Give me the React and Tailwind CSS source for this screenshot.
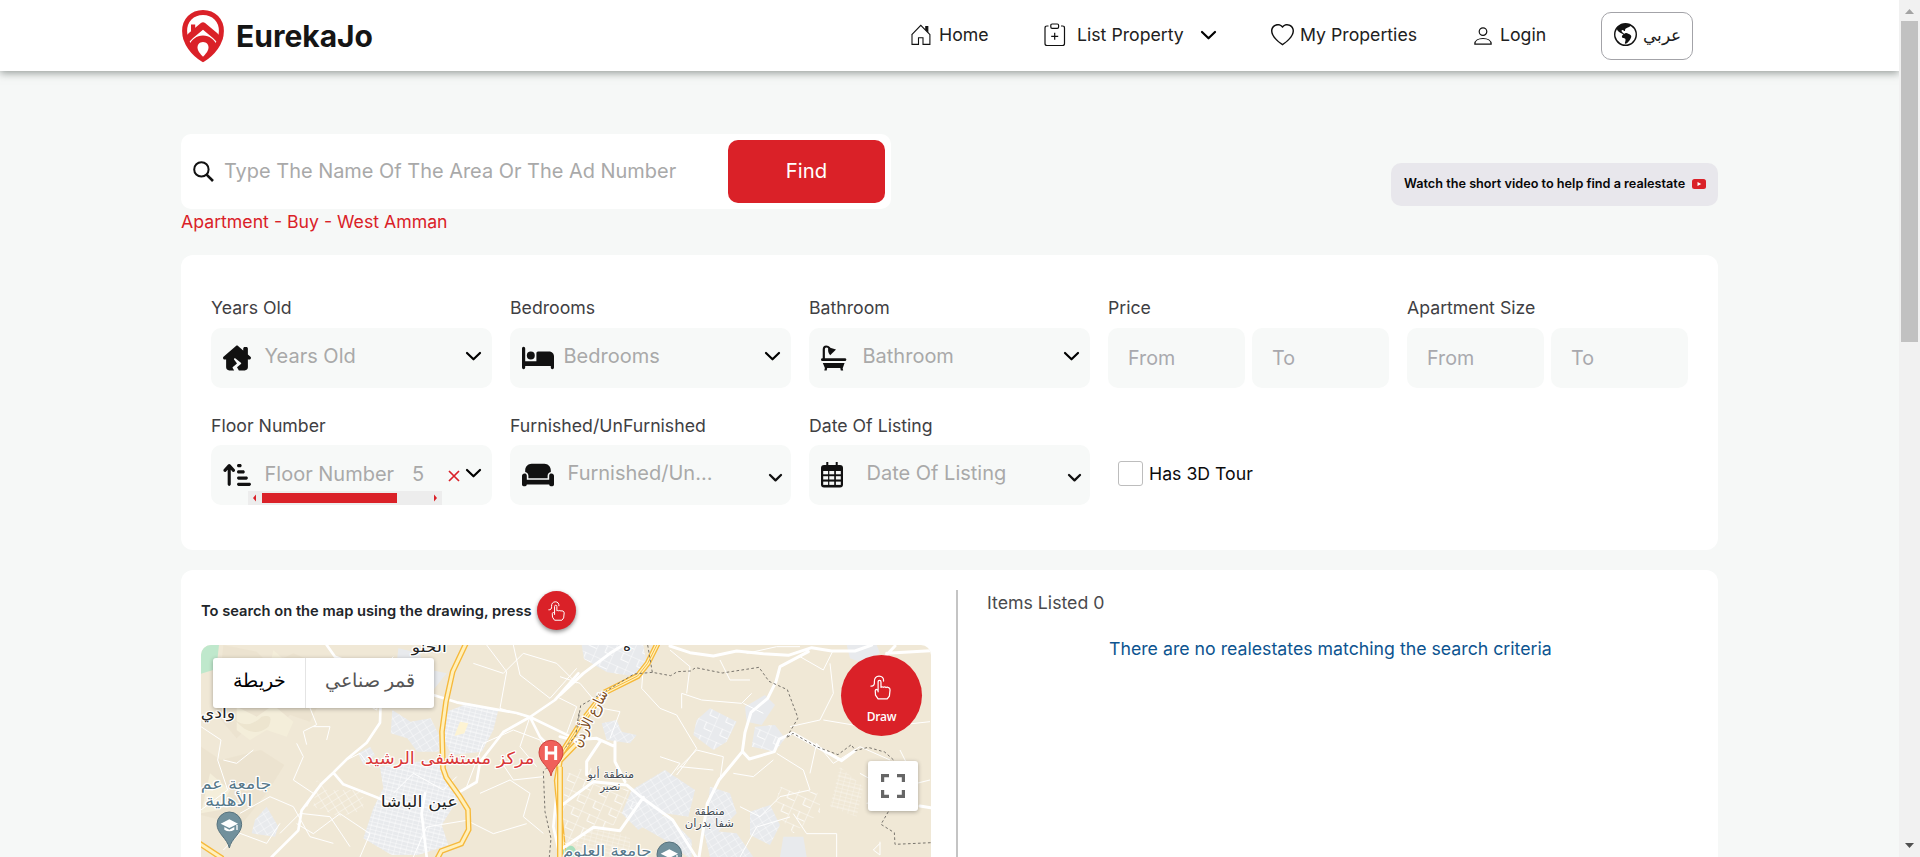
import React from "react";
import { FaBed, FaHouseChimneyCrack, FaArrowUpShortWide, FaCouch } from "react-icons/fa6";
import { BsGlobeAmericas, BsHeart } from "react-icons/bs";

function Logo() {
  return (
    <svg width="44" height="54" viewBox="0 0 44 54" fill="none" stroke="#da2128">
      <path d="M22 3.5C11 3.5 3.6 11.5 3.6 22c0 12 9 22.600 18.400 28.300C31.400 44.600 40.400 34 40.400 22 40.400 11.500 33 3.500 22 3.500Z" strokeWidth="5" />
      <path d="M4.500 32 10 26.500 22 16.500 34 26.500 39.500 32" strokeWidth="6.500" strokeLinejoin="round" />
      <path d="M10 15.500h4.200v5.200L10 24.500Z" fill="#da2128" stroke="none" />
      <path d="M22 26.500c-6.500 0-11.200 4-13.600 9C11.500 43 17 48.500 22 52c5-3.500 10.500-9 13.600-16.500-2.400-5-7.100-9-13.600-9Z" fill="#da2128" stroke="none" />
      <path d="M22 33c-3.800 0-5.500 2.800-5.500 5.600 0 3.400 3 6.600 5.500 9.200 2.500-2.600 5.500-5.800 5.500-9.200C27.500 35.800 25.800 33 22 33Z" fill="#fff" stroke="none" />
    </svg>
  );
}

function Chevron({ size = "lg" }) {
  return size === "lg" ? (
    <svg width="17" height="11" viewBox="0 0 17 11" fill="none" stroke="#000" strokeWidth="2.200" strokeLinecap="round" strokeLinejoin="round">
      <path d="M2 2l6.500 6.300L15 2" />
    </svg>
  ) : (
    <svg width="15" height="10" viewBox="0 0 15 10" fill="none" stroke="#111" strokeWidth="2.300" strokeLinecap="round" strokeLinejoin="round">
      <path d="M2 2l5.500 5.400L13 2" />
    </svg>
  );
}

function HomeIcon() {
  return (
    <svg width="20" height="22" viewBox="0 0 20 22" fill="none" stroke="#111" strokeWidth="1.100">
      <path d="M1 10.500V20.400h6.500v-6.700h4.500v6.700h6.900V10.500M.600 10.800 9.800 1.400 19.200 10.800" />
      <path d="M14.800 2.500h2v5l-2-2Z" fill="#111" />
    </svg>
  );
}

function ClipboardIcon() {
  return (
    <svg width="22" height="24" viewBox="0 0 22 24" fill="none" stroke="#111" strokeWidth="1.200">
      <path d="M4.500 3H3Q1 3 1 5v15.500q0 2 2 2h15.500q2 0 2-2V5q0-2-2-2H17" />
      <rect x="6.800" y="1" width="7.800" height="4.400" rx="1.300" />
      <path d="M10.700 9.800v7M7.200 13.300h7" />
    </svg>
  );
}

function PersonIcon() {
  return (
    <svg width="18" height="18" viewBox="0 0 18 18" fill="none" stroke="#111" strokeWidth="1.200">
      <circle cx="9" cy="4.600" r="3.800" />
      <path d="M.800 17.200C.800 13.600 4.500 11.500 9 11.500s8.200 2.100 8.200 5.700Z" strokeLinejoin="round" />
    </svg>
  );
}

function BathIcon() {
  return (
    <svg width="26" height="26" viewBox="0 0 26 26" fill="#111">
      <path d="M2.800 14V4.300Q2.800 1.500 5.200 1.500 7 1.500 8.600 3.200" fill="none" stroke="#111" strokeWidth="2.200" />
      <path d="M7.500 2.200 15 4.400 9.200 10.200Q6.200 7 7.500 2.200Z" />
      <rect x="0" y="13.200" width="25.300" height="2.900" rx="1.400" />
      <path d="M1.800 18h21.800l-1.800 5H21.600l.6 2.500h-2.400L19.300 23H6.200l-.5 2.500H3.300L3.900 23Z" />
    </svg>
  );
}

function CalendarIcon() {
  return (
    <svg width="22" height="26" viewBox="0 0 22 26">
      <rect x="0" y="3" width="22" height="22.500" rx="3" fill="#111" />
      <path d="M6.300 0v5M15.700 0v5" stroke="#111" strokeWidth="2" />
      <g fill="#f7f9f8">
        {[9, 14.200, 19.600].map((y) =>
          [2.200, 8.300, 14.900].map((x) => <rect key={x + "-" + y} x={x} y={y} width="4.900" height="3.300" />)
        )}
      </g>
    </svg>
  );
}

function TapIcon({ width, height }) {
  return (
    <svg width={width} height={height} viewBox="0 0 22 26" fill="none" stroke="#fff" strokeWidth="1.300" strokeLinecap="round" strokeLinejoin="round">
      <path d="M1 11.500C3.500 11.800 5 10 4.600 7 4.200 3.500 6.500 1 9.500 1c3 0 5 2 4.700 5.200" />
      <path d="M8.500 17.500V7.200q0-1.700 1.500-1.700t1.500 1.700v5.600q1-1 2.500 0 1.300-1 2.800.2 1.300-.7 2.700.2 1.500.6 1.500 2.300l-.700 6.500-2.300 3H8.500l-2.700-4-.300-4.500q0-1.500 1.500-1.500l1.500 1" />
    </svg>
  );
}

const NAV = "flex items-center text-[17.7px] leading-7 text-[#212121]";

function Header() {
  return (
    <header className="relative z-10 flex h-[71px] shrink-0 items-center bg-white pb-px pl-[181px] shadow-[0_2px_8px_rgba(50,60,55,0.5)]">
      <div className="flex w-[730px] items-center gap-[11px]">
        <span className="pt-px"><Logo /></span>
        <span className="pt-px text-[30px] font-bold leading-9 text-[#151515]">EurekaJo</span>
      </div>
      <a className={NAV + " w-[133px] gap-[8px]"}><HomeIcon />Home</a>
      <a className={NAV + " w-[227px]"}>
        <ClipboardIcon />
        <span className="ml-[11px] mr-[16px] whitespace-nowrap">List Property</span>
        <Chevron />
      </a>
      <a className={NAV + " w-[203px] gap-[6px] whitespace-nowrap"}><BsHeart size={23} color="#111" />My Properties</a>
      <a className={NAV + " w-[127px] gap-[8px]"}><span className="pt-[2px]"><PersonIcon /></span>Login</a>
      <button className="mt-[2px] flex h-[48px] w-[92px] items-center justify-center gap-[6px] rounded-[10px] border border-[#a3a3a8] bg-white pb-[3px] pl-px text-[#212121]">
        <BsGlobeAmericas size={23} color="#111" />
        <span className="text-[16.500px] leading-6">عربي</span>
      </button>
    </header>
  );
}

function SearchRow() {
  return (
    <div className="flex h-[75px] items-start justify-between">
      <div className="flex h-[75px] w-[710px] items-center rounded-[10px] bg-white pl-3 pr-[6px]">
        <svg className="-mt-px" width="21" height="21" viewBox="0 0 21 21" fill="none" stroke="#111" strokeWidth="2">
          <circle cx="8.400" cy="8.400" r="7.200" />
          <path d="M13.600 13.600 20 20" strokeWidth="2.600" />
        </svg>
        <span className="ml-[10px] flex-1 pb-[2px] text-[19.950px] leading-7 text-[#a9a9a9]">Type The Name Of The Area Or The Ad Number</span>
        <button className="h-[63px] w-[157px] rounded-[10px] bg-[#da2128] text-[20.300px] text-white">Find</button>
      </div>
      <div className="mt-[29px] flex h-[43px] w-[327px] items-center rounded-[10px] bg-[#e8e7ec] pb-[2px] pl-[13px] text-[12.680px] font-semibold text-[#080808]">
        <span className="w-[288px] whitespace-nowrap">Watch the short video to help find a realestate</span>
        <svg width="14" height="10" viewBox="0 0 14 10">
          <rect width="14" height="10" rx="2.500" fill="#da2128" />
          <path d="M5.500 2.900 9.300 5 5.500 7.100Z" fill="#fff" />
        </svg>
      </div>
    </div>
  );
}

function Label({ children }) {
  return <div className="h-[21px] whitespace-nowrap text-[17.7px] leading-[21px] text-[#3f4043]">{children}</div>;
}

function Select({ label, icon, indent, text, small }) {
  return (
    <div className="flex w-[281px] flex-col gap-[10px]">
      <Label>{label}</Label>
      <div className="flex h-[60px] items-center rounded-[10px] bg-[#f7f9f8] pl-3">
        <span className={indent ? "w-[45.5px]" : "w-[41.5px]"}>{icon}</span>
        <span className="flex-1 pb-[4px] text-[20px] leading-7 text-[#a9a9a9]">{text}</span>
        <span className={small ? "mr-[8px] mt-[5px]" : "mr-[10px] pb-[3px]"}><Chevron size={small ? "sm" : "lg"} /></span>
      </div>
    </div>
  );
}

function FloorSelect() {
  return (
    <div className="flex w-[281px] flex-col gap-[9px]">
      <Label>Floor Number</Label>
      <div className="relative flex h-[60px] items-center rounded-[10px] bg-[#f7f9f8] pl-3 text-[20px] leading-7 text-[#a9a9a9]">
        <span className="w-[41.5px]"><FaArrowUpShortWide size={28} color="#111" /></span>
        <span className="w-[147.500px] whitespace-nowrap pb-[2px]">Floor Number</span>
        <span className="w-[36px] pb-[2px]">5</span>
        <svg className="mt-px" width="12" height="12" viewBox="0 0 12 12" stroke="#da2128" strokeWidth="1.700"><path d="M1 1l10 10M11 1 1 11" /></svg>
        <span className="ml-[5px] pb-[3px]"><Chevron /></span>
        <div className="absolute left-[37px] top-[46px] flex h-[14px] w-[194px] items-center bg-[#ededed]">
          <svg width="14" height="14" viewBox="0 0 14 14" fill="#da2128"><path d="M5 7l3-3.500v7Z" /></svg>
          <div className="h-[10px] w-[135px] bg-[#da2128]" />
          <svg className="ml-auto" width="12" height="14" viewBox="0 0 12 14" fill="#da2128"><path d="M7 7 4 3.500v7Z" /></svg>
        </div>
      </div>
    </div>
  );
}

function Range({ label }) {
  return (
    <div className="flex w-[281px] flex-col gap-[10px]">
      <Label>{label}</Label>
      <div className="flex gap-[7px]">
        {["From", "To"].map((t) => (
          <div key={t} className="flex h-[60px] w-[137px] items-center rounded-[10px] bg-[#f7f9f8] pl-[20px] text-[19.7px] leading-7 text-[#a9a9ae]">{t}</div>
        ))}
      </div>
    </div>
  );
}

function Filters() {
  return (
    <section className="mt-[23px] flex h-[295px] flex-col gap-[27px] rounded-[12px] bg-white pl-[30px] pt-[42px]">
      <div className="flex gap-[18px]">
        <Select label="Years Old" icon={<FaHouseChimneyCrack size={28} color="#111" />} text="Years Old" />
        <Select label="Bedrooms" icon={<FaBed size={32} color="#111" />} text="Bedrooms" />
        <Select label="Bathroom" icon={<BathIcon />} text="Bathroom" />
        <Range label="Price" />
        <Range label="Apartment Size" />
      </div>
      <div className="flex items-start gap-[18px]">
        <FloorSelect />
        <div className="-mb-px flex gap-[18px] [&>div]:gap-[9px]">
          <Select label="Furnished/UnFurnished" icon={<FaCouch size={32} color="#111" />} indent text="Furnished/Un..." small />
          <Select label="Date Of Listing" icon={<CalendarIcon />} indent text="Date Of Listing" small />
        </div>
        <label className="ml-[10px] mt-[30px] flex h-[60px] items-center gap-[6px] pb-[3px] text-[17.7px] text-[#0b0b0b]">
          <span className="h-[25px] w-[25px] rounded-[3px] border border-[#bdbdbd] bg-white" />
          <span className="pt-[2px]">Has 3D Tour</span>
        </label>
      </div>
    </section>
  );
}

function MapLabel({ x, y, size, color = "#222", width, children, transform, halo = 7 }) {
  return (
    <text
      x={x} y={y} fontSize={size} fill={color} textLength={width} lengthAdjust="spacingAndGlyphs"
      textAnchor="middle" direction="rtl" stroke="#fff" strokeWidth={halo} strokeLinejoin="round" paintOrder="stroke"
      fontFamily="'DejaVu Sans', sans-serif" transform={transform}
    >
      {children}
    </text>
  );
}

function SchoolPin({ x, y }) {
  return (
    <g transform={`translate(${x} ${y})`}>
      <path d="M0 69C-6 40-37 26-37-2a37 37 0 0 1 74 0C37 26 6 40 0 69Z" fill="#71909c" stroke="#56717c" strokeWidth="3" />
      <path d="M-26-4 0-17 26-4 0 9Z M-15 6 0 14 15 6V14Q0 24-15 14ZM21 0h4v15h-4Z" fill="#fff" />
    </g>
  );
}

function MapCanvas() {
  return (
    <svg className="block" width="730" height="212" viewBox="0 0 730 212">
      <defs>
        <pattern id="streetsA" width="17" height="23" patternUnits="userSpaceOnUse" patternTransform="rotate(14)">
          <path d="M0 0H17M0 0V23M0 12H17" stroke="#fff" strokeWidth="2.200" />
        </pattern>
        <pattern id="streetsB" width="24" height="19" patternUnits="userSpaceOnUse" patternTransform="rotate(-32)">
          <path d="M0 0H24M0 0V19" stroke="#fff" strokeWidth="2.200" />
        </pattern>
        <pattern id="streetsC" width="52" height="44" patternUnits="userSpaceOnUse" patternTransform="rotate(24)">
          <path d="M0 0H52M0 0V44M28 0V22H52" fill="none" stroke="#fff" strokeWidth="2.400" />
        </pattern>
      </defs>
      <rect width="730" height="212" fill="#f0e8d6" />

      <g transform="translate(-21 -85) scale(0.33333)">
        <path d="M63 255H117L109 327 63 341Z" fill="#bfe8cc" />
        <path d="M130 255l100 20 40 40 70-35 70 30-60 45 70 70-30 60-60-20-40 40-70-20-50 50-60-70ZM63 560l60 40 120-30 70 45-50 80-80 100-120-30Z" fill="#ebe2cd" opacity=".75" />
        <path d="M170 440l60 30 50-35 60 50-20 45-60-20-50 30-40-30ZM280 270l60 55-30 70-50-30ZM90 640l60 50-30 60-57 10Z" fill="#f4eeda" />
        <path d="M165 480q40 30 80-10 40-10 20 30-50 40-100-20Z" fill="#e6dcc4" opacity=".5" />
        <g fill="#e8eaed">
          <path d="M655 265l65 15 10 45 70 15-40 50-90-20-20-60Z" />
          <path d="M637 450l55 35 60-10 30 60 0 40-70 0-30-40-50-15Z" />
          <path d="M800 455l65-25 90 20-15 60-35 65-90 10-25-50Z" />
          <path d="M600 620l190-25 10 60 35 60-50 80 20 60-90 30-80 0-85-50 30-90 30-60Z" />
          <path d="M225 780l35-40 35 60-10 30-70-10Z M535 580l35-20 15 25-35 30Z" />
        </g>
        <path d="M800 455l65-25 90 20-15 60-35 65-90 10-25-50Z" fill="url(#streetsA)" />
        <path d="M600 620l190-25 10 60 35 60-50 80 20 60-90 30-80 0-85-50 30-90 30-60Z" fill="url(#streetsA)" />
        <path d="M637 450l55 35 60-10 30 60 0 40-70 0-30-40-50-15ZM225 780l35-40 35 60-10 30-70-10ZM535 580l35-20 15 25-35 30Z" fill="url(#streetsB)" />
        <path d="M410 660l30 30 110 0 0 60-70 20-80-30Z" fill="url(#streetsB)" />
        <path d="M840 485l25 5-12 30-30 8Z" fill="#fdf3d3" />
        <g fill="none" stroke="#fff" strokeWidth="3" strokeLinejoin="round">
          <path d="M120 300l50 50 50 10 40-30 90 40 60-20M63 500l60 40-10 60 30 90-80 60M350 550l20 40-30 70 60 40-20 40M400 500l50 0-10 40M390 444l20 50-40 20 10 40M180 760l90-50 70 30 50 90 70 20M300 820l60-60 90 10 60 90M880 310l90 30 60-60 100 30 60 60M920 255l60 80-20 110 80 25M1000 255l20 90 90 70 80-90M900 700l90-40 60 40-20 70 60 50M700 891l40-90 120-20 80 40 100-30M860 680l50-130 90-40 80 30 40 90M960 600l40 60 90-10M1050 470l-30 90 50 60M130 600l40 10 50-40M540 891l30-70-90-60-80 60-50-30M500 600l40-20 30 40" />
          <path d="M430 430l60-60 90-20 60-60M500 400l90 50 10-60 50-30M1130 410l60 30-30 80M640 700l60-60 90 50 40-40M130 870l50-50 80 30 40-60" />
        </g>
        <g fill="none" stroke="#fff" strokeWidth="8" strokeLinejoin="round" strokeLinecap="round">
          <path d="M275 891l80-80 10-60 60-80 35-33 40-40 60-50 40-60 2-60M460 638l30 35 90 35 50 20M760 405l70 22 180 32 40 12 145 70M1050 471l-80 45-70 90-10 60-60 35M1195 340l-70 80-75 51M1050 471l30 60 30 30M735 700l-10 60 15 131M440 255l25 35 40 15M1130 700l-10 100 20 90" />
        </g>
        <path d="M858 250l-40 85-20 90-12 90 3 110 10 28 40 56 25 40 2 60-22 42-60 22-20 38" fill="none" stroke="#f6b93b" strokeWidth="17" />
        <path d="M858 250l-40 85-20 90-12 90 3 110 10 28 40 56 25 40 2 60-22 42-60 22-20 38" fill="none" stroke="#fff0bc" strokeWidth="9" />
        <path d="M58 850l70 46M1200 540l-60 62-10 60 12 130 10 100" fill="none" stroke="#f6b93b" strokeWidth="17" />
        <path d="M58 850l70 46M1200 540l-60 62-10 60 12 130 10 100" fill="none" stroke="#fff0bc" strokeWidth="9" />
        <path d="M1197 460l-12 70-95 105 5 120 18 80-5 56" fill="none" stroke="#77736c" strokeWidth="3" strokeDasharray="8 7" />
      </g>

      <g transform="translate(359 -85) scale(0.33333)">
        <g fill="#e8eaed">
          <path d="M65 255h185l12 70-50 22-70-10-70-40Z M860 255l90 0 10 25-50 30-40-15Z" />
          <path d="M410 480l40-35 80 40-30 60-40 25-60-45ZM555 440l60-35 30 30-40 60-45-10ZM585 500l60-5 30 40-30 40-70-15Z" />
          <path d="M125 490l45-10 15 35 45 10-20 25-70-10ZM215 690l100-60 90 60-20 80-70-10-80 50-50-50Z" />
          <path d="M255 740l80 40 60 60 0 60-80-60-70-40ZM450 680l60 20 20 60-60 60-35 10ZM570 755l60-20 30 60-30 60-60-30ZM430 810l100 10 50 71-130 0ZM670 830l60 0 10 61-80 0Z" />
        </g>
        <path d="M410 480l40-35 80 40-30 60-40 25-60-45ZM65 255h185l12 70-50 22-70-10-70-40ZM585 500l60-5 30 40-30 40-70-15Z" fill="url(#streetsC)" />
        <path d="M215 690l100-60 90 60-20 80-70-10-80 50-50-50ZM450 680l60 20 20 60-60 60-35 10ZM570 755l60-20 30 60-30 60-60-30ZM430 810l100 10 50 71-130 0ZM255 740l80 40 60 60 0 60-80-60-70-40ZM125 490l45-10 15 35 45 10-20 25-70-10Z" fill="url(#streetsB)" />
        <path d="M20 640l70-20 60 60 60 10 30 40-60 60-80 20-80 60-20-60Z M660 680l120 20 0 60-80 60-60-70Z" fill="url(#streetsC)" />
        <path d="M40 850l30 40 80 0 60 0 0-60-110-30ZM840 620l70 60-20 90-80-30Z" fill="url(#streetsA)" opacity=".6" />
        <path d="M15 870q20-25 32 0l0 20h-32ZM0 860l12 0 0 30-12 0Z" fill="#a8dfbd" />
        <g fill="none" stroke="#fff" strokeWidth="3" strokeLinejoin="round">
          <path d="M248 345l-3 40 55 60 50 20 60 100-60 80M365 445l0-45 60 20 120 10 30-30M330 270l60 50-10 80M550 430l60 30M690 500l90-20 40-80-10-90M720 290l70 40 30-60M790 480l120 20 40-20M750 640l20-90 50 60 80-50 90 40M480 660l10-70-80-20-60 60M520 640l60 10 60-50M650 580l80 50 20 60-90 20-60 60-60-30M900 640l90 50 120-30M830 891l0-70-90 0-40-60M1110 485l-90 10-30-30M540 891l50-90 100-30M360 620l100 10M300 590l60 20-30 40M560 280l90-20 70 0M480 300l30 60 60 0M0 350l60 20 50 60M100 440l80 15-30 80M960 850l-20 20 20 15 0-40M920 730l60-10 20-70M1020 570l20 40-30 40" />
        </g>
        <g fill="none" stroke="#fff" strokeWidth="9" strokeLinejoin="round" strokeLinecap="round">
          <path d="M0 405l70-65 80-60 40-25M330 258l60 20 70 10 70-15 80 8 75 5 70-23 60 10 70 0 50-18M745 275l-85 45-12 45-25 50-50 42-18 60-8 58-70 85-35 70-25 161M548 575l20 22 75-22 15-38 40-18M700 520l145 82 40-30M980 280l130-8M0 740l100-75 100 10 48 40 90 65 70 111M0 870l100-68 80 10 70-100M165 545l0 60 30 60M0 530l40 10 70-5 55 25M120 545l-40 60 0 40M1080 738l32 5M975 290l30-32" />
        </g>
        <path d="M298 240l-35 70-30 38-100 50-70 90-70 110M0 620l0 271" fill="none" stroke="#f6b93b" strokeWidth="18" />
        <path d="M298 240l-35 70-30 38-100 50-70 90-70 110M0 620l0 271" fill="none" stroke="#fff0bc" strokeWidth="10" />
        <path d="M298 240l-35 70-30 38-100 50-70 90-70 110" fill="none" stroke="#f6b93b" strokeWidth="3" />
        <path d="M263 255l14 82 55 10 20-12 40-2 15-10 80 16 110-17 30 42 55 25 32 85-35 60 20-14 70 40 65 24 40-30 12 18 38-10 50 14 28 25M985 755l-22 38 40 25 2 35 109-5M277 337l-55 5-90 55-70 40-15 90-30 35" fill="none" stroke="#77736c" strokeWidth="3" strokeDasharray="8 7" />
      </g>

      <g transform="translate(-21 -85) scale(0.33333)">
        <MapLabel x={748} y={276} size={44} width={105}>الحنو</MapLabel>
        <MapLabel x={114} y={474} size={45} width={103}>وادي</MapLabel>
        <MapLabel x={809} y={611} size={50} width={508} color="#d93838">مركز مستشفى الرشيد</MapLabel>
        <MapLabel x={718} y={740} size={48} width={231}>عين الباشا</MapLabel>
        <MapLabel x={168} y={687} size={46} width={212} color="#56788a">جامعة عم</MapLabel>
        <MapLabel x={146} y={739} size={46} width={142} color="#56788a">الأهلية</MapLabel>
        <SchoolPin x={148} y={795} />
        <path d="M1113 648c-4-28-36-40-36-71a36 36 0 0 1 72 0c0 31-32 43-36 71Z" fill="#f0605a" stroke="#cc453f" strokeWidth="3" />
        <path d="M1099 558v42M1127 558v42M1099 579h28" stroke="#fff" strokeWidth="9" />
      </g>
      <g transform="translate(359 -85) scale(0.33333)">
        <MapLabel x={201} y={272} size={40} width={24}>ه</MapLabel>
        <MapLabel x={0} y={0} size={44} width={186} color="#7a4b1c" halo={9} transform="translate(102 482) rotate(-63)">شارع الأردن</MapLabel>
        <MapLabel x={152} y={655} size={34} width={140} color="#444b52" halo={5}>منطقة أبو</MapLabel>
        <MapLabel x={151} y={689} size={34} width={60} color="#444b52" halo={5}>نصير</MapLabel>
        <MapLabel x={449} y={765} size={34} width={90} color="#444b52" halo={5}>منطقة</MapLabel>
        <MapLabel x={448} y={800} size={34} width={148} color="#444b52" halo={5}>شفا بدران</MapLabel>
        <MapLabel x={142} y={889} size={45} width={266} color="#56788a">جامعة العلوم</MapLabel>
        <SchoolPin x={328} y={885} />
      </g>
    </svg>
  );
}

function MapPanel() {
  return (
    <div className="flex w-[730px] flex-col">
      <div className="flex h-[55px] items-start pt-[1px]">
        <span className="w-[334px] whitespace-nowrap pt-[9px] text-[14.700px] font-semibold leading-[22px] text-[#212529]">To search on the map using the drawing, press</span>
        <span className="ml-[2px] flex h-[39px] w-[39px] items-center justify-center rounded-full bg-[#da2128] shadow-[0_2px_4px_rgba(0,0,0,0.450)]">
          <TapIcon width={17} height={20} />
        </span>
      </div>
      <div className="relative h-[212px] w-[730px] overflow-hidden rounded-t-[10px]">
        <MapCanvas />
        <div className="absolute left-[12px] top-[13px] flex h-[50px] rounded-[3px] bg-white font-['Liberation_Serif',serif] text-[18.500px] leading-8 shadow-[0_1px_4px_rgba(0,0,0,0.300)]">
          <div className="flex w-[93px] items-center justify-center border-r border-[#e4e4e4] pb-[4px] text-black">خريطة</div>
          <div className="flex w-[128px] items-center justify-center pb-[4px] text-[#565656]">قمر صناعي</div>
        </div>
        <div className="absolute left-[640px] top-[10px] flex h-[81px] w-[81px] flex-col items-center rounded-full bg-[#da2128] pt-[20px]">
          <span className="mr-[3px] h-[25px]"><TapIcon width={21} height={25} /></span>
          <span className="mt-[9px] font-['Open_Sans',sans-serif] text-[12px] font-semibold leading-[16px] tracking-[-0.300px] text-white">Draw</span>
        </div>
        <div className="absolute left-[667px] top-[116px] flex h-[50px] w-[50px] items-center justify-center rounded-[3px] bg-white shadow-[0_1px_4px_rgba(0,0,0,0.300)]">
          <svg width="24" height="24" viewBox="0 0 24 24" fill="none" stroke="#666" strokeWidth="3.200">
            <path d="M1.600 8V1.600H8M16 1.600h6.400V8M22.400 16v6.400H16M8 22.400H1.600V16" />
          </svg>
        </div>
      </div>
    </div>
  );
}

function Results() {
  return (
    <div className="flex flex-1 flex-col border-l-2 border-[#c4c4c4] pl-[29px] pt-px text-[17.730px] leading-[24px]">
      <div className="text-[#4a4a4d]">Items Listed 0</div>
      <div className="mt-[22px] pl-[122px] text-[#0d5490]">There are no realestates matching the search criteria</div>
    </div>
  );
}

export default function App() {
  return (
    <div className="flex h-[857px] w-[1920px] overflow-hidden bg-[#f6f8f7] font-['Inter',sans-serif]">
      <div className="flex w-[1899px] flex-col overflow-hidden">
        <Header />
        <main className="flex w-[1718px] flex-1 flex-col pl-[181px] pt-[63px]">
          <SearchRow />
          <div className="h-[23px] text-[17.7px] leading-[26px] text-[#da2128]">Apartment - Buy - West Amman</div>
          <Filters />
          <section className="mt-[20px] flex h-[287px] gap-[25px] rounded-t-[12px] bg-white pl-[20px] pt-[20px]">
            <MapPanel />
            <Results />
          </section>
        </main>
      </div>
      <div className="flex w-[21px] flex-col items-center bg-[#f1f1f1]">
        <svg width="21" height="21" viewBox="0 0 21 21" fill="#a3a3a3"><path d="M6 14h9l-4.500-5Z" /></svg>
        <div className="h-[321px] w-[17px] bg-[#c1c1c1]" />
        <svg className="mt-auto" width="21" height="21" viewBox="0 0 21 21" fill="#505050"><path d="M6 7h9l-4.500 5Z" /></svg>
      </div>
    </div>
  );
}
